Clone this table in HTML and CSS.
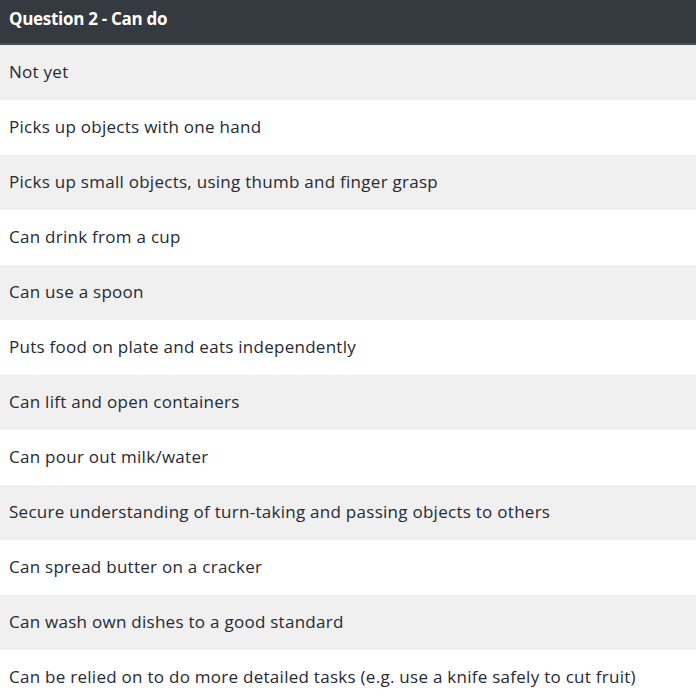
FILE: index.html
```html
<!DOCTYPE html>
<html>
<head>
<meta charset="utf-8">
<link rel="stylesheet" href="styles.css">
</head>
<body>
<div class="table">
  <div class="head">Question 2 - Can do</div>
  <div class="row">Not yet</div>
  <div class="row">Picks up objects with one hand</div>
  <div class="row">Picks up small objects, using thumb and finger grasp</div>
  <div class="row">Can drink from a cup</div>
  <div class="row">Can use a spoon</div>
  <div class="row">Puts food on plate and eats independently</div>
  <div class="row">Can lift and open containers</div>
  <div class="row">Can pour out milk/water</div>
  <div class="row">Secure understanding of turn-taking and passing objects to others</div>
  <div class="row">Can spread butter on a cracker</div>
  <div class="row">Can wash own dishes to a good standard</div>
  <div class="row">Can be relied on to do more detailed tasks (e.g. use a knife safely to cut fruit)</div>
</div>
</body>
</html>
```
FILE: styles.css
```css
html, body {
  margin: 0;
  padding: 0;
  background: #ffffff;
}
body {
  font-family: "Open Sans", "Noto Sans", sans-serif;
  color: #262a33;
}
.table {
  display: flex;
  flex-direction: column;
}
.head {
  box-sizing: border-box;
  background: #343a40;
  border-bottom: 2px solid #454d55;
  height: 45px;
  color: #ffffff;
  font-weight: 700;
  font-size: 17px;
  padding: 0 9px 6px;
  display: flex;
  align-items: center;
  letter-spacing: -0.3px;
}
.row {
  box-sizing: border-box;
  height: 55px;
  display: flex;
  align-items: center;
  padding: 0 9px 2px;
  font-size: 17px;
  letter-spacing: 0.27px;
  white-space: nowrap;
}
.row:nth-child(even) {
  background: #f0f0f0;
}
```
